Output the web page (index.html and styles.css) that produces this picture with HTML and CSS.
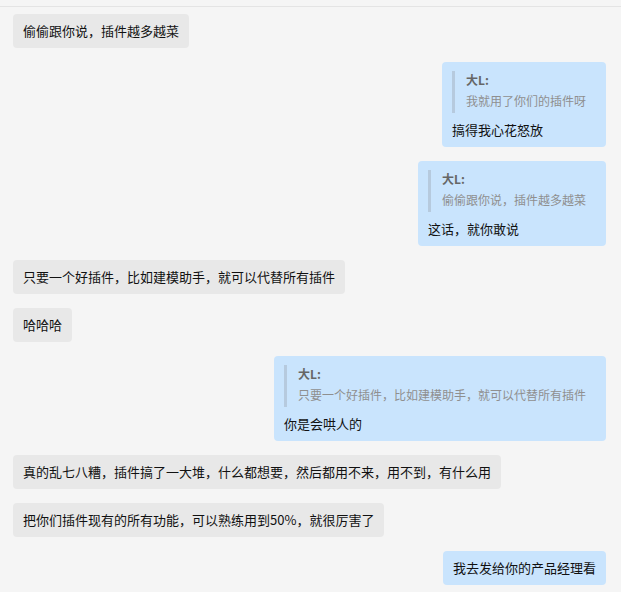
FILE: index.html
```html
<!DOCTYPE html>
<html lang="zh-CN">
<head>
  <meta charset="UTF-8" />
  <meta name="viewport" content="width=device-width, initial-scale=1" />
  <title>聊天记录</title>
  <link rel="stylesheet" href="styles.css">
</head>
<body>

  <div class="chat">
    <div class="msg left"><div class="bubble">偷偷跟你说，插件越多越菜</div></div>

    <div class="msg right">
      <div class="bubble">
        <div class="quote">
          <div class="quote-name">大L:</div>
          <div class="quote-text">我就用了你们的插件呀</div>
        </div>
        <div class="text">搞得我心花怒放</div>
      </div>
    </div>

    <div class="msg right">
      <div class="bubble">
        <div class="quote">
          <div class="quote-name">大L:</div>
          <div class="quote-text">偷偷跟你说，插件越多越菜</div>
        </div>
        <div class="text">这话，就你敢说</div>
      </div>
    </div>

    <div class="msg left"><div class="bubble">只要一个好插件，比如建模助手，就可以代替所有插件</div></div>

    <div class="msg left"><div class="bubble">哈哈哈</div></div>

    <div class="msg right">
      <div class="bubble">
        <div class="quote">
          <div class="quote-name">大L:</div>
          <div class="quote-text">只要一个好插件，比如建模助手，就可以代替所有插件</div>
        </div>
        <div class="text">你是会哄人的</div>
      </div>
    </div>

    <div class="msg left"><div class="bubble">真的乱七八糟，插件搞了一大堆，什么都想要，然后都用不来，用不到，有什么用</div></div>

    <div class="msg left"><div class="bubble">把你们插件现有的所有功能，可以熟练用到50%，就很厉害了</div></div>

    <div class="msg right"><div class="bubble">我去发给你的产品经理看</div></div>
  </div>

</body>
</html>
```

FILE: styles.css
```css
body {
  margin: 0;
  background-color: #f5f5f5;
  font-family: "Noto Sans CJK SC", "Noto Sans", sans-serif;
  font-size: 13px;
  color: #111;
}
.chat {
  margin-top: 6px;
  border-top: 1px solid #e4e4e4;
  padding: 7px 15px 20px 13px;
  display: flex;
  flex-direction: column;
  gap: 14.3px;
}
.msg {
  display: flex;
}
.msg.left {
  justify-content: flex-start;
}
.msg.right {
  justify-content: flex-end;
}
.bubble {
  padding: 8px 10px;
  line-height: 17.7px;
  border-radius: 4px;
  background-color: #e8e8e8;
  white-space: nowrap;
}
.msg.right .bubble {
  background-color: #c9e4fd;
}
.quote {
  margin-top: 1px;
  margin-bottom: 8px;
  padding: 0 10px 3px 11px;
  border-left: 3px solid #b6cade;
  font-size: 12px;
  line-height: 18px;
}
.quote-name {
  font-weight: bold;
  color: #666;
  margin-bottom: 3px;
}
.quote-text {
  color: #8f8f8f;
}
```
